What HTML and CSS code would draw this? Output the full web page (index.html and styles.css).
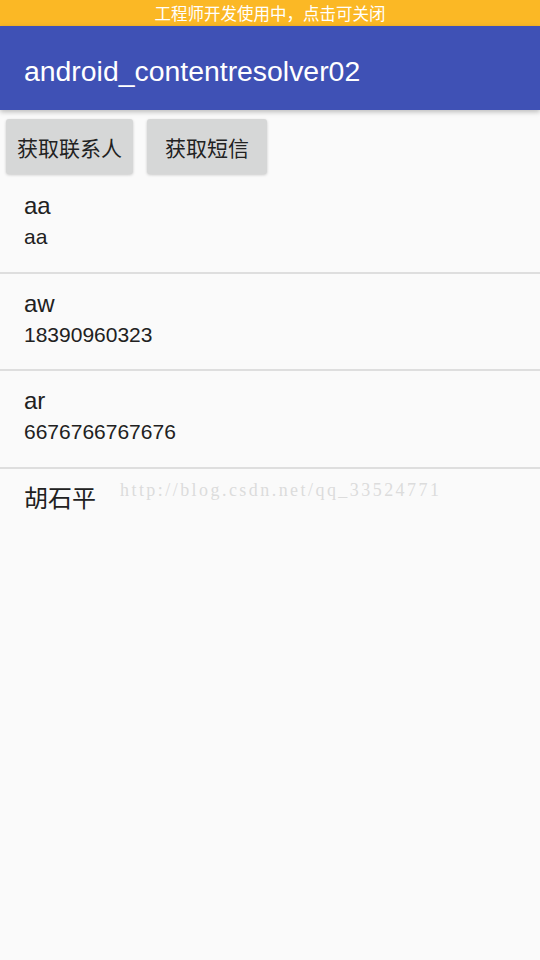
FILE: index.html
```html
<!DOCTYPE html>
<html lang="zh-CN">
<head>
  <meta charset="UTF-8">
  <meta name="viewport" content="width=device-width, initial-scale=1.0">
  <title>android_contentresolver02</title>
  <link rel="stylesheet" href="styles.css">
</head>
<body>

<!-- Barra de aviso -->
<div class="dev-bar">工程师开发使用中，点击可关闭</div>

<!-- Barra de la app -->
<header class="app-bar">
  <h1 class="app-title">android_contentresolver02</h1>
</header>

<div class="actions">
  <button class="btn">获取联系人</button>
  <button class="btn">获取短信</button>
</div>

<ul class="contact-list">
  <li class="contact">
    <span class="contact-name">aa</span>
    <span class="contact-phone">aa</span>
  </li>
  <li class="contact">
    <span class="contact-name">aw</span>
    <span class="contact-phone">18390960323</span>
  </li>
  <li class="contact">
    <span class="contact-name">ar</span>
    <span class="contact-phone">6676766767676</span>
  </li>
  <li class="contact last">
    <span class="contact-name">胡石平</span>
    <span class="watermark">http://blog.csdn.net/qq_33524771</span>
  </li>
</ul>

</body>
</html>
```

FILE: styles.css
```css
/* Estilos de la pantalla */
body {
  margin: 0;
  background-color: #fafafa;
  color: #212121;
  font-family: "Liberation Sans", "Noto Sans CJK SC", sans-serif;
  width: 540px;
  height: 960px;
  overflow: hidden;
}

.dev-bar {
  height: 26px;
  line-height: 27px;
  background-color: #fbb825;
  color: #fff;
  font-family: "Noto Sans CJK SC", sans-serif;
  font-size: 16.5px;
  text-align: center;
}

.app-bar {
  height: 84px;
  box-sizing: border-box;
  padding: 31px 0 0 24px;
  background-color: #3f51b5;
  box-shadow: 0 2px 5px rgba(0, 0, 0, 0.25);
  position: relative;
}

.app-title {
  margin: 0;
  color: #fff;
  font-size: 28.4px;
  line-height: 28px;
  font-weight: normal;
}

.actions {
  display: flex;
  gap: 14px;
  padding: 9px 6px 2px;
}

.btn {
  height: 55px;
  min-width: 120px;
  padding: 0 11px;
  border: none;
  border-radius: 3px;
  background-color: #d6d7d7;
  color: #222;
  font-family: "Noto Sans CJK SC", sans-serif;
  font-size: 21px;
  box-shadow: 0 1px 3px rgba(0, 0, 0, 0.2);
}

.contact-list {
  list-style: none;
  margin: 0;
  padding: 0;
}

.contact {
  height: 97.5px;
  padding: 16px 24px 0;
  box-sizing: border-box;
  border-bottom: 2px solid #dedede;
  display: flex;
  flex-direction: column;
}

.contact.last {
  position: relative;
  border-bottom: none;
}

.contact-name {
  font-size: 24px;
  line-height: 28px;
}

.contact-phone {
  font-size: 21px;
  line-height: 34px;
}

/* Marca de agua sobre la lista */
.watermark {
  position: absolute;
  left: 120px;
  top: 11px;
  color: #dcdcdc;
  font-family: "Liberation Serif", serif;
  font-size: 18px;
  letter-spacing: 2.45px;
  white-space: nowrap;
}
```
